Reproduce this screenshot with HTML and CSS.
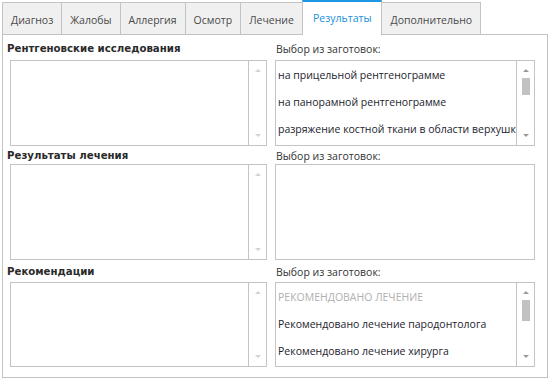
FILE: index.html
```html
<!DOCTYPE html>
<html lang="ru">
<head>
<meta charset="utf-8">
<link rel="stylesheet" href="styles.css">
</head>
<body>
<div class="wrap">
  <div class="tabs">
    <div class="tab">Диагноз</div>
    <div class="tab">Жалобы</div>
    <div class="tab">Аллергия</div>
    <div class="tab">Осмотр</div>
    <div class="tab">Лечение</div>
    <div class="tab active">Результаты</div>
    <div class="tab">Дополнительно</div>
  </div>
  <div class="panel">
    <div class="lbl bold">Рентгеновские исследования</div>
    <div class="lbl reg">Выбор из заготовок:</div>

    <div class="box memo h86 mt3">
      <div class="area"></div>
      <div class="sb"><span class="up dis"></span><span class="fill"></span><span class="down dis"></span></div>
    </div>
    <div class="box list h86 mt3">
      <div class="items">
        <div class="item">на прицельной рентгенограмме</div>
        <div class="item">на панорамной рентгенограмме</div>
        <div class="item">разряжение костной ткани в области верхушки корня</div>
      </div>
      <div class="sb"><span class="up"></span><span class="thumb t1"></span><span class="fill"></span><span class="down"></span></div>
    </div>

    <div class="lbl bold mt2">Результаты лечения</div>
    <div class="lbl reg mt2">Выбор из заготовок:</div>

    <div class="box memo h96">
      <div class="area"></div>
      <div class="sb"><span class="up dis"></span><span class="fill"></span><span class="down dis"></span></div>
    </div>
    <div class="box list h96">
      <div class="items"></div>
    </div>

    <div class="lbl bold mt4">Рекомендации</div>
    <div class="lbl reg mt4">Выбор из заготовок:</div>

    <div class="box memo h85 mt2">
      <div class="area"></div>
      <div class="sb"><span class="up dis"></span><span class="fill"></span><span class="down dis"></span></div>
    </div>
    <div class="box list h85 mt2">
      <div class="items">
        <div class="item muted">РЕКОМЕНДОВАНО ЛЕЧЕНИЕ</div>
        <div class="item">Рекомендовано лечение пародонтолога</div>
        <div class="item">Рекомендовано лечение хирурга</div>
      </div>
      <div class="sb"><span class="up"></span><span class="thumb t2"></span><span class="fill"></span><span class="down"></span></div>
    </div>
  </div>
</div>
</body>
</html>
```

FILE: styles.css
```css
* { box-sizing: border-box; }
html, body { margin: 0; padding: 0; background: #fff; }
body {
  width: 549px;
  height: 379px;
  overflow: hidden;
  font-family: "Open Sans", "Noto Sans", sans-serif;
  font-size: 10.5px;
  color: #333;
}
.wrap { padding-left: 2px; }
.tabs {
  display: flex;
  align-items: flex-end;
  height: 34px;
}
.tab {
  height: 32px;
  padding: 2px 8px 0 8px;
  margin-right: -1px;
  border: 1px solid #c3c3c3;
  border-bottom: none;
  background: #f0f0f0;
  color: #4a4a4a;
  display: flex;
  align-items: center;
  white-space: nowrap;
}
.tab.active {
  position: relative;
  z-index: 1;
  height: 35px;
  margin-bottom: -1px;
  background: #fff;
  border-top: 2px solid #1b97e3;
  color: #1b8fdc;
  padding: 0 10px 2px 10px;
}
.panel {
  width: 546px;
  border: 1px solid #c3c3c3;
  padding: 6px 11px 10px 4px;
  display: grid;
  grid-template-columns: 260px 260px;
  column-gap: 8px;
  align-items: start;
}
.lbl {
  height: 16px;
  line-height: 16px;
  white-space: nowrap;
}
.lbl.bold {
  font-family: "DejaVu Sans", Verdana, sans-serif;
  font-weight: bold;
  font-size: 10.2px;
  color: #2a2a2a;
}
.lbl.reg {
  margin-left: 1px;
  color: #333;
}
.mt2 { margin-top: 2px; }
.mt3 { margin-top: 3px; }
.mt4 { margin-top: 4px; }
.h85 { height: 85px; }
.h86 { height: 86px; }
.h96 { height: 96px; }
.box {
  border: 1px solid #c4c4c4;
  background: #fff;
  display: flex;
}
.box.memo { margin-left: 3px; width: 257px; }
.box.list { width: 260px; }
.area, .items { flex: 1; min-width: 0; overflow: hidden; }
.items { padding-left: 2px; }
.item {
  height: 27px;
  line-height: 28px;
  white-space: nowrap;
  overflow: hidden;
  color: #1d1d2e;
}
.item.muted { color: #b0b0b0; }
.sb {
  width: 18px;
  border-left: 1px solid #c4c4c4;
  display: flex;
  flex-direction: column;
  align-items: center;
  padding: 8px 0 8px 0;
}
.sb .fill { flex: 1; }
.up, .down {
  width: 0;
  height: 0;
  border-left: 3px solid transparent;
  border-right: 3px solid transparent;
}
.up { border-bottom: 3px solid #9a9a9a; }
.down { border-top: 3px solid #9a9a9a; }
.up.dis { border-bottom-color: #d4d4d4; }
.down.dis { border-top-color: #d4d4d4; }
.thumb {
  width: 8px;
  background: #c2c2c2;
  margin-top: 6px;
}
.t1 { height: 17px; }
.t2 { height: 21px; }
```
